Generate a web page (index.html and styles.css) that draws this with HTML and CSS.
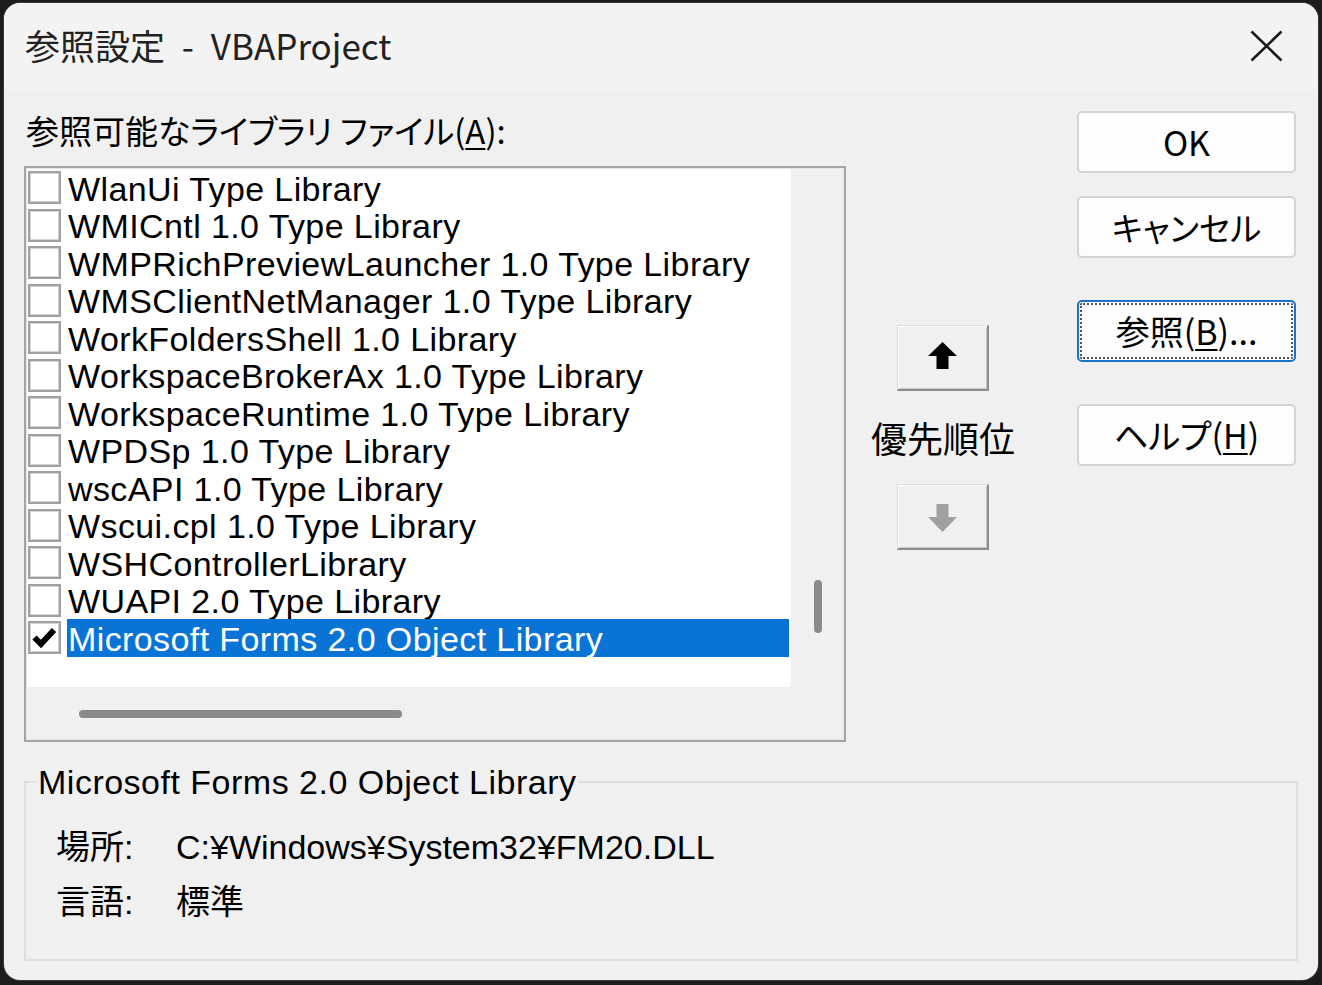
FILE: index.html
```html
<!DOCTYPE html>
<html lang="ja">
<head>
<meta charset="utf-8">
<title>参照設定 - VBAProject</title>
<link rel="stylesheet" href="styles.css">
</head>
<body>
<div class="window">
  <div class="titlebar">
    <div class="title">参照設定 - VBAProject</div>
    <div class="close">
      <svg width="33" height="32" viewBox="0 0 33 32"><path d="M1.5 1.5L31.5 30.5M31.5 1.5L1.5 30.5" stroke="#1a1a1a" stroke-width="2.6" fill="none"/></svg>
    </div>
  </div>
  <div class="main">
    <div class="left">
      <div class="listlabel">参照可能なライブラリ ファイル(<u>A</u>):</div>
      <div class="listbox">
        <div class="items">
          <div class="row"><span class="cb"></span><span class="txt">WlanUi Type Library</span></div>
          <div class="row"><span class="cb"></span><span class="txt">WMICntl 1.0 Type Library</span></div>
          <div class="row"><span class="cb"></span><span class="txt">WMPRichPreviewLauncher 1.0 Type Library</span></div>
          <div class="row"><span class="cb"></span><span class="txt">WMSClientNetManager 1.0 Type Library</span></div>
          <div class="row"><span class="cb"></span><span class="txt">WorkFoldersShell 1.0 Library</span></div>
          <div class="row"><span class="cb"></span><span class="txt">WorkspaceBrokerAx 1.0 Type Library</span></div>
          <div class="row"><span class="cb"></span><span class="txt">WorkspaceRuntime 1.0 Type Library</span></div>
          <div class="row"><span class="cb"></span><span class="txt">WPDSp 1.0 Type Library</span></div>
          <div class="row"><span class="cb"></span><span class="txt">wscAPI 1.0 Type Library</span></div>
          <div class="row"><span class="cb"></span><span class="txt">Wscui.cpl 1.0 Type Library</span></div>
          <div class="row"><span class="cb"></span><span class="txt">WSHControllerLibrary</span></div>
          <div class="row"><span class="cb"></span><span class="txt">WUAPI 2.0 Type Library</span></div>
          <div class="row selected"><span class="cb"><svg width="25" height="23" viewBox="0 0 25 23"><path d="M2.5 11.5L9 18L22 4" stroke="#000" stroke-width="6" fill="none" stroke-linejoin="miter"/></svg></span><span class="txt">Microsoft Forms 2.0 Object Library</span></div>
        </div>
        <div class="vscroll"><div class="vthumb"></div></div>
        <div class="hscroll"><div class="hthumb"></div></div>
        <div class="corner"></div>
      </div>
    </div>
    <div class="middle">
      <div class="arrowbtn up">
        <svg width="29" height="27" viewBox="0 0 29 27"><polygon points="14.5,0 29,14 20.5,14 20.5,27 8.5,27 8.5,14 0,14" fill="#000"/></svg>
      </div>
      <div class="prio">優先順位</div>
      <div class="arrowbtn down">
        <svg width="29" height="28" viewBox="0 0 29 28"><polygon points="8.5,0 20.5,0 20.5,13 29,13 14.5,28 0,13 8.5,13" fill="#a0a0a0"/></svg>
      </div>
    </div>
    <div class="right">
      <div class="btn first">OK</div>
      <div class="btn second">キャンセル</div>
      <div class="btn focus">参照(<u>B</u>)...</div>
      <div class="btn">ヘルプ(<u>H</u>)</div>
    </div>
  </div>
  <fieldset class="info">
    <legend class="legend">Microsoft Forms 2.0 Object Library</legend>
    <div class="inforow"><span class="key">場所:</span><span class="val">C:¥Windows¥System32¥FM20.DLL</span></div>
    <div class="inforow"><span class="key">言語:</span><span class="val">標準</span></div>
  </fieldset>
</div>
</body>
</html>
```

FILE: styles.css
```css
html, body {
  margin: 0;
  padding: 0;
}
body {
  width: 1322px;
  height: 985px;
  overflow: hidden;
  background: #1c1c1c;
  font-family: "Noto Sans CJK JP", sans-serif;
  color: #000;
}
.window {
  margin: 3px 0 0 4px;
  width: 1314px;
  height: 977px;
  border-radius: 16px;
  background: #f0f0f0;
  overflow: hidden;
  display: flex;
  flex-direction: column;
  box-shadow: 0 0 0 1px #3a3a3a;
}
.titlebar {
  height: 87px;
  flex: none;
  background: #f3f3f3;
  display: flex;
  align-items: center;
  justify-content: space-between;
  padding: 0 35px 0 21px;
}
.title {
  font-size: 35px;
  word-spacing: 9px;
  color: #222;
  line-height: 40px;
  margin-top: -3px;
}
.close {
  display: flex;
  margin-top: -2px;
}
.main {
  display: flex;
  padding-left: 20px;
  flex: none;
}
.left {
  width: 822px;
  display: flex;
  flex-direction: column;
}
.listlabel {
  height: 76px;
  box-sizing: border-box;
  padding: 20px 0 0 2px;
  line-height: 40px;
  font-size: 33px;
  font-feature-settings: "palt";
}
.listlabel u, .btn u {
  text-underline-offset: 4px;
  text-decoration-thickness: 2px;
}
.listbox {
  box-sizing: border-box;
  width: 822px;
  height: 576px;
  border: 2px solid #a4a4a4;
  padding: 1px;
  background: #f0f0f0;
  display: grid;
  grid-template-columns: 764px 52px;
  grid-template-rows: 518px 52px;
  box-shadow: inset 0 0 0 1px #e6e6e6;
}
.items {
  background: #fff;
  border-bottom-right-radius: 4px;
  overflow: hidden;
}
.row {
  height: 37.5px;
  display: flex;
  align-items: center;
  font-family: "Liberation Sans", "Noto Sans CJK JP", sans-serif;
  font-size: 34px;
  letter-spacing: 0.4px;
}
.cb {
  box-sizing: border-box;
  width: 33px;
  height: 33px;
  margin-left: 1px;
  border: 2px solid #a0a0a0;
  box-shadow: inset 0 0 0 1px #d4d4d4;
  background: #fff;
  flex: none;
  display: flex;
  align-items: center;
  justify-content: center;
}
.txt {
  flex: 1;
  margin-left: 6px;
  margin-right: 2px;
  height: 38px;
  line-height: 40px;
  padding-left: 1px;
  white-space: nowrap;
  overflow: hidden;
}
.selected .txt {
  background: #0a74d6;
  color: #fff;
}
.vscroll {
  background: #f0f0f0;
}
.vthumb {
  width: 8px;
  height: 53px;
  margin: 411px 0 0 23px;
  background: #8a8a8a;
  border-radius: 4px;
}
.hscroll {
  background: #f0f0f0;
  padding-top: 23px;
  box-sizing: border-box;
}
.hthumb {
  width: 323px;
  height: 8px;
  margin-left: 52px;
  background: #8a8a8a;
  border-radius: 4px;
}
.corner {
  background: #f0f0f0;
}
.middle {
  width: 92px;
  margin-left: 51px;
  display: flex;
  flex-direction: column;
  align-items: center;
}
.arrowbtn {
  box-sizing: border-box;
  width: 92px;
  height: 66px;
  background: #f0f0f0;
  border-style: solid;
  border-width: 1px 2px 2px 1px;
  border-color: #dcdcdc #8c8c8c #8c8c8c #dcdcdc;
  box-shadow: inset 1px 1px 0 #fff, inset -1px -1px 0 #c8c8c8;
  display: flex;
  align-items: center;
  justify-content: center;
}
.up {
  margin-top: 235px;
}
.up svg {
  margin-top: -4px;
}
.down svg {
  margin-top: 2px;
}
.prio {
  margin-top: 26px;
  height: 40px;
  line-height: 40px;
  font-size: 36px;
  white-space: nowrap;
  margin-bottom: 27px;
}
.right {
  margin-left: 88px;
  display: flex;
  flex-direction: column;
}
.btn {
  box-sizing: border-box;
  width: 219px;
  height: 62px;
  margin-top: 42px;
  background: #fdfdfd;
  border: 2px solid #d4d4d4;
  border-radius: 5px;
  display: flex;
  align-items: center;
  justify-content: center;
  font-size: 34px;
  font-feature-settings: "palt";
  line-height: 40px;
}
.btn.first {
  margin-top: 21px;
}
.btn.second {
  margin-top: 23px;
  font-size: 33px;
}
.btn.focus {
  border-color: #1a73c9;
  outline: 2px dotted #555;
  outline-offset: -5px;
}
.info {
  box-sizing: border-box;
  margin: 22px 20px 0 20px;
  height: 197px;
  border: 2px solid #dedede;
  padding: 0 0 0 31px;
  min-width: 0;
}
.legend {
  padding: 0 2px;
  margin-left: -21px;
  font-family: "Liberation Sans", "Noto Sans CJK JP", sans-serif;
  font-size: 34px;
  letter-spacing: 0.5px;
  line-height: 36px;
}
.inforow {
  height: 55px;
  line-height: 55px;
  display: flex;
  font-family: "Liberation Sans", "Noto Sans CJK JP", sans-serif;
  font-size: 34px;
}
.inforow:first-of-type {
  margin-top: 20px;
}
.key {
  width: 120px;
  flex: none;
  margin-left: -1px;
}
```
